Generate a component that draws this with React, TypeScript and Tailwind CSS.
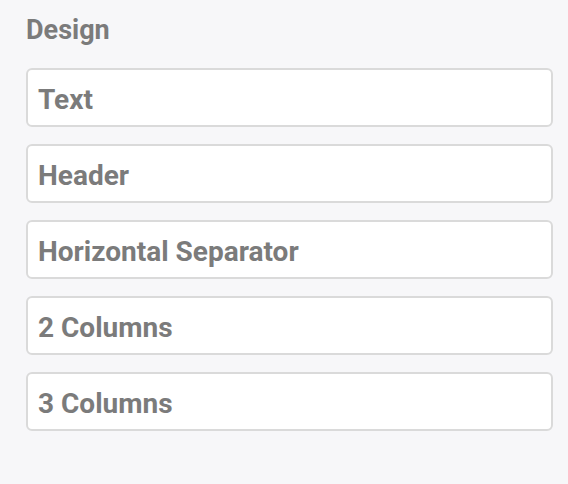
const items = ["Text", "Header", "Horizontal Separator", "2 Columns", "3 Columns"];

export default function App() {
  return (
    <div
      className="min-h-[484px] w-full bg-[#f7f7f9] pl-[26px] pr-[15px] pt-[12px]"
      style={{ fontFamily: "Roboto, 'Liberation Sans', sans-serif" }}
    >
      <h2 className="text-[27px] leading-[36px] font-bold text-[#7b7b7b]">Design</h2>
      <div className="mt-[20px] flex flex-col gap-[17px]">
        {items.map((item) => (
          <div
            key={item}
            className="flex h-[59px] items-center rounded-[6px] border-2 border-[#dadada] bg-white px-[10px] pt-[4px] text-[28px] font-bold text-[#7b7b7b]"
          >
            {item}
          </div>
        ))}
      </div>
    </div>
  );
}
